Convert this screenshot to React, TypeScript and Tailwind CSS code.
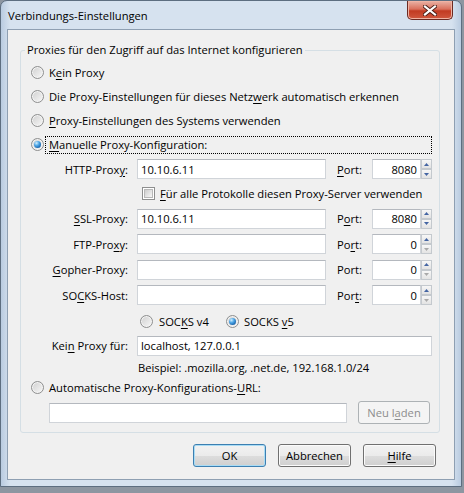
import React from "react";

// Text with a Windows-style mnemonic: the character after "&" is underlined.
function Mn({ text }: { text: string }) {
  const i = text.indexOf("&");
  if (i < 0) return <>{text}</>;
  return (
    <>
      {text.slice(0, i)}
      <u className="underline underline-offset-[2px]">{text[i + 1]}</u>
      {text.slice(i + 2)}
    </>
  );
}

function Radio({ checked }: { checked?: boolean }) {
  return (
    <span className="flex h-[13px] w-[13px] shrink-0 items-center justify-center rounded-full border border-[#8e8f8f] bg-[linear-gradient(135deg,#cfcfcf,#f8f8f8)] shadow-[inset_0_0_0_1px_#f4f4f4]">
      {checked && (
        <span className="h-[7px] w-[7px] rounded-full bg-[radial-gradient(circle_at_35%_30%,#d2f0ff_0%,#4aa3e4_40%,#10569e_85%)]" />
      )}
    </span>
  );
}

function Checkbox() {
  return (
    <span className="flex h-[13px] w-[13px] shrink-0 items-center justify-center border border-[#8e8f8f] bg-white">
      <span className="h-[9px] w-[9px] border border-[#b8b8b8] bg-[linear-gradient(135deg,#cdcdcd,#f7f7f7)]" />
    </span>
  );
}

function TextBox({ value = "", width, right }: { value?: string; width: string; right?: boolean }) {
  return (
    <div
      className={`flex h-[20px] items-center border border-[#d0d4d9] border-t-[#b4b8be] bg-white px-[3px] ${width} ${
        right ? "justify-end" : ""
      }`}
    >
      {value}
    </div>
  );
}

function SpinButton({ up, enabled }: { up?: boolean; enabled: boolean }) {
  return (
    <div className="flex h-[10px] w-[11px] items-center justify-center border border-[#c4c9ce] bg-[linear-gradient(#f7f7f7,#e3e3e3)]">
      <svg width="5" height="3" viewBox="0 0 5 3">
        <polygon
          points={up ? "2.5,0 5,3 0,3" : "0,0 5,0 2.5,3"}
          fill={enabled ? "#4465a3" : "#a9a9a9"}
        />
      </svg>
    </div>
  );
}

function PortBox({ value }: { value: string }) {
  return (
    <div className="flex items-center">
      <TextBox value={value} width="w-[49px]" right />
      <div className="flex flex-col">
        <SpinButton up enabled />
        <SpinButton enabled={value !== "0"} />
      </div>
    </div>
  );
}

function Button({
  label,
  isDefault,
  disabled,
  width = "w-[73px]",
}: {
  label: string;
  isDefault?: boolean;
  disabled?: boolean;
  width?: string;
}) {
  const look = disabled
    ? "border-[#adb2b5] bg-[#f4f4f4] text-[#8d8d8d]"
    : isDefault
    ? "border-[#3c7fb1] bg-[linear-gradient(#f2f2f2_0%,#ebebeb_50%,#dddddd_51%,#cfcfcf_100%)] shadow-[inset_0_0_0_1px_#a9dcf5]"
    : "border-[#707070] bg-[linear-gradient(#f2f2f2_0%,#ebebeb_50%,#dddddd_51%,#cfcfcf_100%)] shadow-[inset_0_0_0_1px_#fbfbfb]";
  return (
    <div className={`flex h-[23px] items-center justify-center rounded-[3px] border ${width} ${look}`}>
      <Mn text={label} />
    </div>
  );
}

const modes = [
  { label: "K&ein Proxy", h: "h-[24px]" },
  { label: "Die Proxy-Einstellungen für dieses Netz&werk automatisch erkennen", h: "h-[24px]" },
  { label: "&Proxy-Einstellungen des Systems verwenden", h: "h-[24px]" },
];

const servers = [
  { label: "&SSL-Proxy:", host: "10.10.6.11", port: "P&ort:", value: "8080", h: "h-[25px]" },
  { label: "FTP-Pro&xy:", host: "", port: "Po&rt:", value: "0", h: "h-[26px]" },
  { label: "&Gopher-Proxy:", host: "", port: "Port:", value: "0", h: "h-[25px]" },
  { label: "SO&CKS-Host:", host: "", port: "Por&t:", value: "0", h: "h-[26px]" },
];

function ServerRow({ label, host, port, value, h }: { label: string; host: string; port: string; value: string; h: string }) {
  return (
    <div className={`flex items-center ${h}`}>
      <div className="w-[107px] text-right">
        <Mn text={label} />
      </div>
      <div className="ml-[9px]">
        <TextBox value={host} width="w-[189px]" />
      </div>
      <div className="ml-[11px] w-[35px]">
        <Mn text={port} />
      </div>
      <PortBox value={value} />
    </div>
  );
}

export default function App() {
  return (
    <div className="h-[493px] w-[464px] overflow-hidden bg-[#8d96a1] font-['Open_Sans','Noto_Sans',sans-serif] text-[11.2px] leading-[15px] text-black">
      <div className="flex h-[487px] w-[462px] flex-col rounded-t-[7px] border border-[#5d6e80] bg-[linear-gradient(90deg,#b9cbe0_0%,#d6e2ef_2%,#d6e2ef_98%,#b9cbe0_100%)] px-[6px] pb-[6px]">
        {/* title bar */}
        <div className="flex h-[28px] items-start justify-between">
          <div className="flex h-[28px] items-center pl-[1px]">Verbindungs-Einstellungen</div>
          <div className="mr-[2px] flex h-[19px] w-[46px] items-center justify-center rounded-b-[5px] border border-t-0 border-[#6b2a22] bg-[linear-gradient(#eab3a6_0%,#d9705c_45%,#c23b22_55%,#d0573e_100%)] shadow-[inset_0_0_0_1px_#f0b3a3]">
            <svg width="14" height="11" viewBox="0 0 14 11">
              <path d="M2 1.5 L12 9.5 M12 1.5 L2 9.5" stroke="#4a1d16" strokeWidth="4" strokeLinecap="square" />
              <path d="M2 1.5 L12 9.5 M12 1.5 L2 9.5" stroke="#ffffff" strokeWidth="2.2" strokeLinecap="square" />
            </svg>
          </div>
        </div>

        {/* client area */}
        <div className="flex h-[451px] flex-col border border-[#8e9fb2] bg-[#f0f0f0]">
          <fieldset className="ml-[12px] mt-[12px] w-[420px] rounded-[3px] border border-[#d5dfe5] pb-[4px] pt-[2px]">
            <legend className="ml-[4px] px-[2px] leading-[16px]">
              Proxies für den Zugriff auf das Internet konfigurieren
            </legend>

            {modes.map((m) => (
              <div key={m.label} className={`flex items-center gap-[5px] pl-[10px] ${m.h}`}>
                <Radio />
                <span>
                  <Mn text={m.label} />
                </span>
              </div>
            ))}

            <div className="flex h-[25px] items-center pl-[10px]">
              <Radio checked />
              <div className="ml-[1px] mr-[7px] flex h-[18px] flex-1 items-center border border-dotted border-black pl-[3px]">
                <Mn text="&Manuelle Proxy-Konfiguration:" />
              </div>
            </div>

            <ServerRow label="HTTP-Prox&y:" host="10.10.6.11" port="&Port:" value="8080" h="h-[24px]" />

            <div className="flex h-[25px] items-center gap-[5px] pl-[121px]">
              <Checkbox />
              <span>
                <Mn text="&Für alle Protokolle diesen Proxy-Server verwenden" />
              </span>
            </div>

            {servers.map((s) => (
              <ServerRow key={s.label} {...s} />
            ))}

            <div className="flex h-[26px] items-center pl-[119px]">
              <div className="flex w-[86px] items-center gap-[6px]">
                <Radio />
                <span>
                  <Mn text="SOC&KS v4" />
                </span>
              </div>
              <div className="flex items-center gap-[5px]">
                <Radio checked />
                <span>
                  <Mn text="SOCKS &v5" />
                </span>
              </div>
            </div>

            <div className="flex h-[23px] items-center">
              <div className="w-[107px] text-right">
                <Mn text="Kei&n Proxy für:" />
              </div>
              <div className="ml-[9px]">
                <TextBox value="localhost, 127.0.0.1" width="w-[295px]" />
              </div>
            </div>

            <div className="flex h-[20px] items-center pl-[117px]">Beispiel: .mozilla.org, .net.de, 192.168.1.0/24</div>

            <div className="flex h-[20px] items-center gap-[5px] pl-[10px]">
              <Radio />
              <span>
                <Mn text="Automatische Proxy-Konfigurations-&URL:" />
              </span>
            </div>

            <div className="flex h-[31px] items-center pl-[28px]">
              <TextBox width="w-[298px]" />
              <div className="ml-[11px]">
                <Button label="Neu l&aden" disabled width="w-[72px]" />
              </div>
            </div>
          </fieldset>

          <div className="mt-[11px] flex justify-end gap-[12px] pr-[18px]">
            <Button label="OK" isDefault />
            <Button label="Abbrechen" />
            <Button label="&Hilfe" />
          </div>
        </div>
      </div>
    </div>
  );
}
